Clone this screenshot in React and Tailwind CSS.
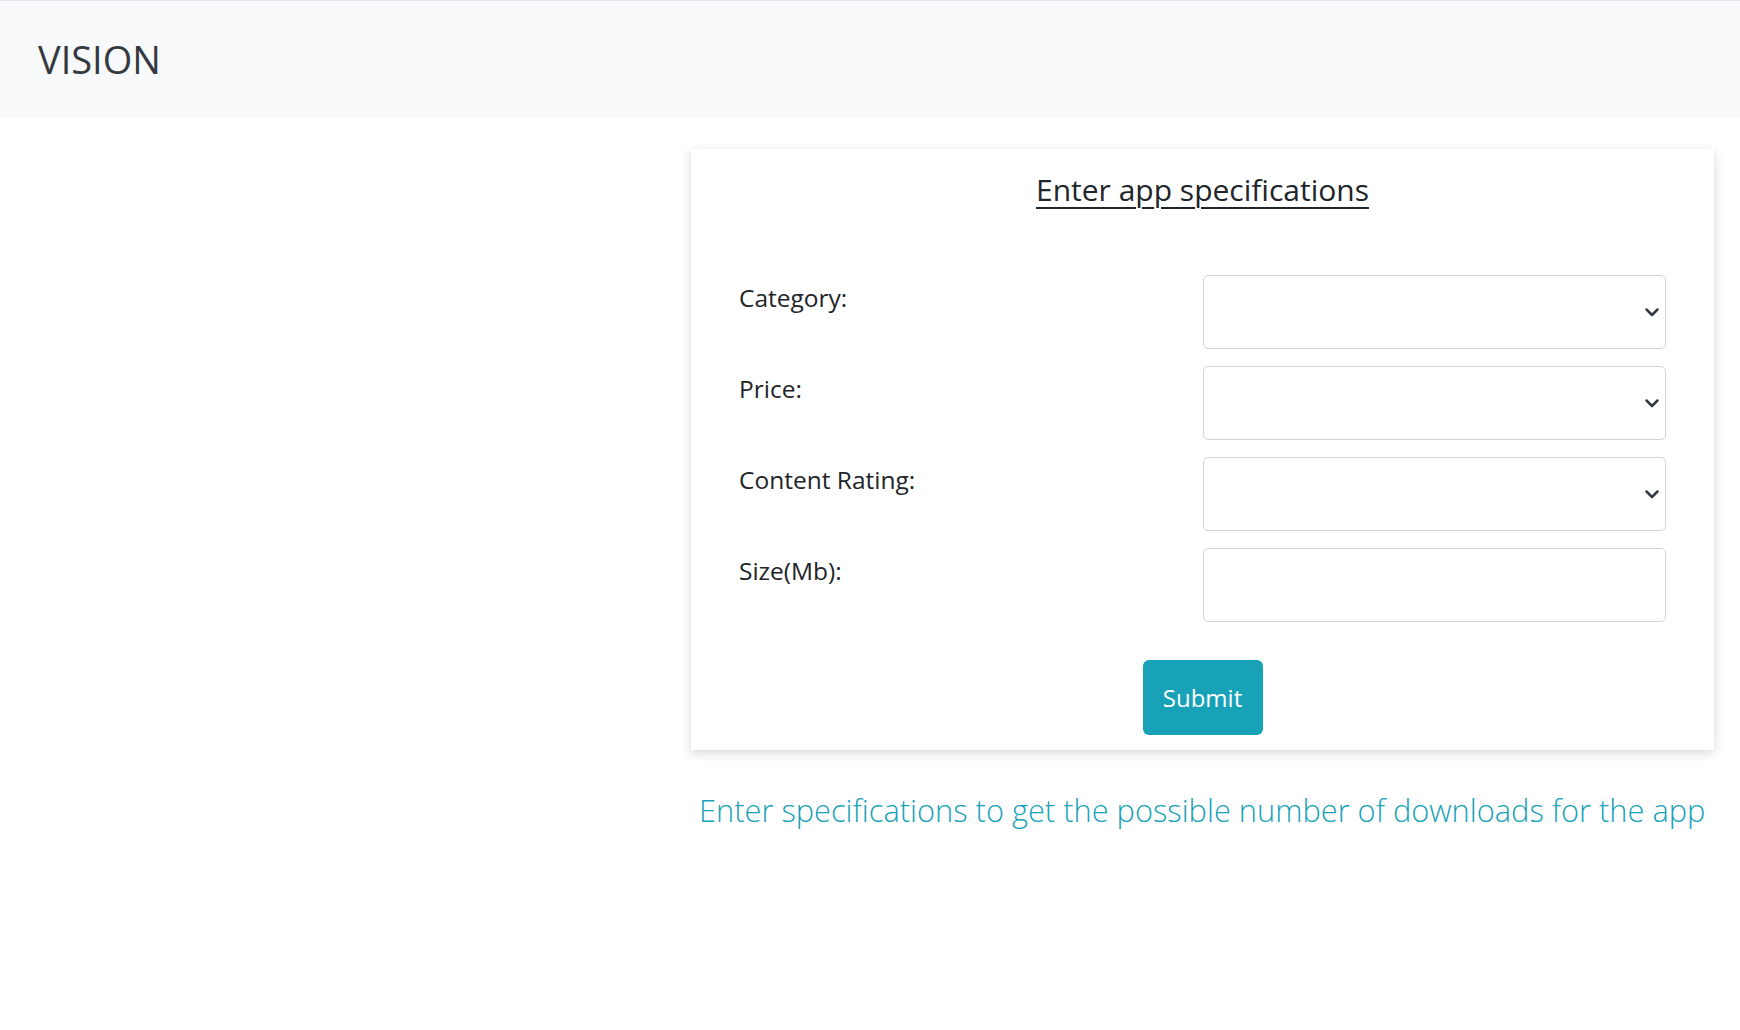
import React, { useState } from 'react';

// Bootstrap-ish select chevron
function Chevron() {
  return (
    <svg
      className="pointer-events-none absolute right-[6px] top-1/2 -translate-y-1/2"
      width="16"
      height="16"
      viewBox="0 0 16 16"
      fill="none"
      stroke="#343a40"
      strokeWidth="2.5"
      strokeLinecap="round"
      strokeLinejoin="round"
    >
      <path d="M2.5 5.5l5.5 5.5 5.5-5.5" />
    </svg>
  );
}

function Field({ label, type, value, onChange }) {
  return (
    <div className="grid grid-cols-2 items-start">
      <label className="pt-[5px] text-[24.5px] font-medium text-[#212529]">{label}</label>
      {type === 'select' ? (
        <div className="relative">
          <select
            value={value}
            onChange={e => onChange(e.target.value)}
            className="h-[74px] w-full appearance-none rounded-[5px] border border-[#ced4da] bg-white px-3 text-[20px] outline-none"
          >
            <option value=""></option>
          </select>
          <Chevron />
        </div>
      ) : (
        <input
          type="text"
          value={value}
          onChange={e => onChange(e.target.value)}
          className="h-[74px] w-full rounded-[5px] border border-[#ced4da] bg-white px-3 text-[20px] outline-none"
        />
      )}
    </div>
  );
}

export default function App() {
  const [form, setForm] = useState({ category: '', price: '', rating: '', size: '' });

  const fields = [
    { key: 'category', label: 'Category:', type: 'select' },
    { key: 'price', label: 'Price:', type: 'select' },
    { key: 'rating', label: 'Content Rating:', type: 'select' },
    { key: 'size', label: 'Size(Mb):', type: 'input' }
  ];

  return (
    <div className="min-h-[1030px] bg-white font-['Open_Sans',sans-serif]">
      {/* Navbar */}
      <nav className="flex h-[118px] items-center border-t border-[#e5e7eb] bg-[#f8f9fa] pl-[38px]">
        <span className="text-[38px] text-[#343a40]">VISION</span>
      </nav>

      {/* Main */}
      <div className="pl-[691px] pr-[26px] pt-[31px]">
        <div className="bg-white px-[48px] pb-[15px] pt-[18px] shadow-[0_3px_10px_rgba(0,0,0,0.16)]">
          <h2 className="text-center text-[30px] text-[#212529] underline decoration-[2px] underline-offset-[6px]">
            Enter app specifications
          </h2>

          <div className="mt-[63px] flex flex-col gap-[17px]">
            {fields.map(f => (
              <Field
                key={f.key}
                label={f.label}
                type={f.type}
                value={form[f.key]}
                onChange={v => setForm({ ...form, [f.key]: v })}
              />
            ))}
          </div>

          <div className="mt-[38px] flex justify-center">
            <button className="h-[75px] w-[120px] rounded-[6px] bg-[#17a2b8] text-[24px] text-white">
              Submit
            </button>
          </div>
        </div>

        <p className="mt-[37px] pl-[8px] text-[30.8px] font-light text-[#17a2b8]">
          Enter specifications to get the possible number of downloads for the app
        </p>
      </div>
    </div>
  );
}
